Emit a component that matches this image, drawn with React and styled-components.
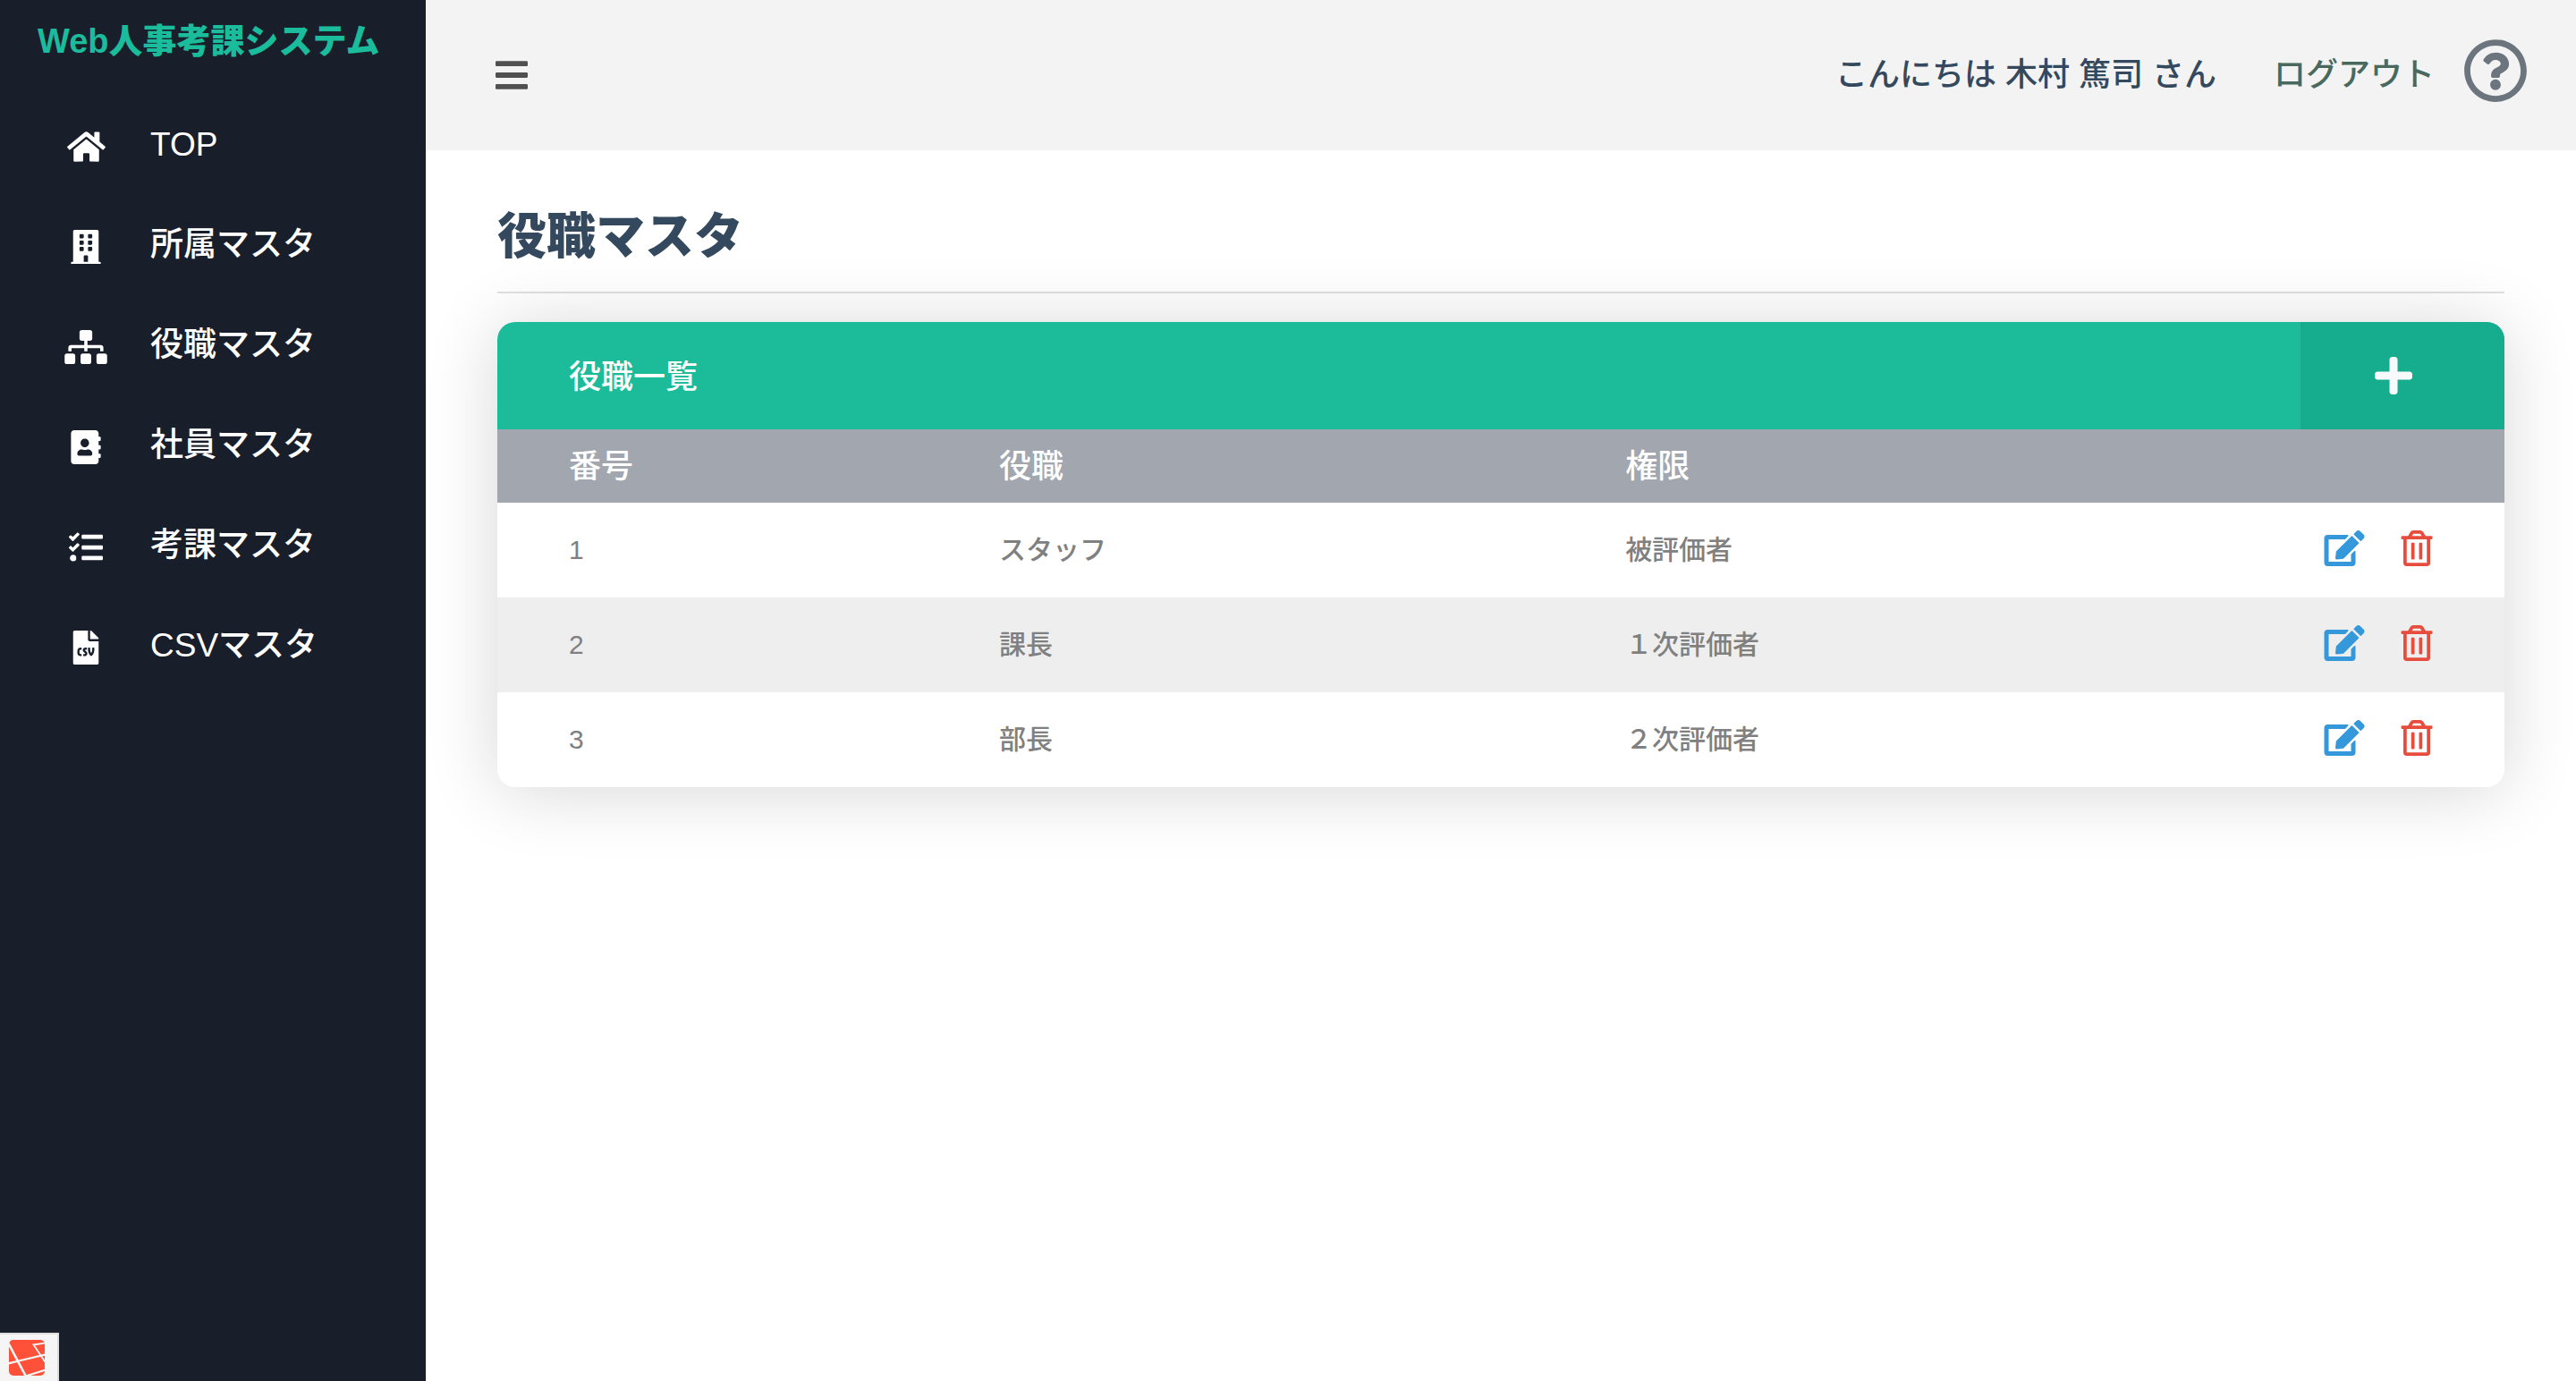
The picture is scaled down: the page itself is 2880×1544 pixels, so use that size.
import React from "react";
import styled, { createGlobalStyle } from "styled-components";
import {
  FaHome,
  FaBuilding,
  FaSitemap,
  FaAddressBook,
  FaTasks,
  FaFileCsv,
  FaBars,
  FaPlus,
  FaEdit,
  FaRegTrashAlt,
  FaRegQuestionCircle,
} from "react-icons/fa";

const GlobalStyle = createGlobalStyle`
  *, *::before, *::after { box-sizing: border-box; }
  body {
    margin: 0;
    background: #fff;
    color: #34495e;
    font-family: "Liberation Sans", "Noto Sans CJK JP", sans-serif;
    font-size: 36px;
    font-weight: 500;
    line-height: 54px;
  }
  svg { display: block; }
`;

const Layout = styled.div`
  display: flex;
  min-height: 100vh;
`;

const Sidebar = styled.aside`
  flex: 0 0 476px;
  background: #191e2b;
`;

const Brand = styled.a`
  display: block;
  padding: 16px 42px 0;
  color: #1abc9c;
  font-size: 38px;
  font-weight: 900;
  line-height: 60px;
  text-decoration: none;
  white-space: nowrap;
`;

const Menu = styled.ul`
  margin: 0;
  padding: 30px 0 0;
  list-style: none;
`;

const MenuLink = styled.a`
  display: flex;
  align-items: center;
  gap: 48px;
  height: 112px;
  padding: 0 72px;
  color: #fff;
  font-size: 37px;
  text-decoration: none;
  white-space: nowrap;
`;

const MenuIcon = styled.span`
  display: flex;
  justify-content: center;
  width: 48px;
  padding-top: 4px;
  font-size: 38px;
  svg { width: ${(p) => p.$width}px; }
`;

const Main = styled.div`
  flex: 1;
  min-width: 0;
`;

const Header = styled.header`
  display: flex;
  align-items: center;
  justify-content: space-between;
  height: 168px;
  padding: 0 54px 0 78px;
  background: #f3f3f3;
`;

const IconButton = styled.button`
  display: flex;
  padding: 0;
  border: 0;
  background: none;
  color: ${(p) => p.$color};
  font-size: ${(p) => p.$size}px;
  cursor: pointer;
  svg { width: ${(p) => p.$width}px; }
`;

const Account = styled.div`
  display: flex;
  align-items: center;
`;

const LogoutLink = styled.a`
  margin: 0 32px 0 64px;
  color: #49695e;
  text-decoration: none;
`;

const HelpLink = styled.a`
  padding-bottom: 10px;
  color: #6c757d;
  font-size: 72px;
`;

const Content = styled.main`
  padding: 56px 80px;
`;

const PageTitle = styled.h1`
  margin: 0 0 32px;
  padding-bottom: 22px;
  border-bottom: 2px solid #dee0e2;
  font-size: 55px;
  font-weight: 900;
  line-height: 80px;
`;

const Card = styled.section`
  overflow: hidden;
  border-radius: 20px;
  background: #fff;
  box-shadow: 0 4px 80px rgba(0, 0, 0, 0.16);
`;

const CardHeader = styled.div`
  display: flex;
  align-items: center;
  justify-content: space-between;
  height: 120px;
  padding-left: 80px;
  background: #1cbc9b;
  color: #fff;
`;

const CardTitle = styled.h2`
  margin: 0;
  padding-top: 4px;
  font-size: 36px;
  font-weight: 500;
`;

const AddButton = styled.button`
  display: flex;
  align-items: center;
  justify-content: center;
  width: 228px;
  height: 120px;
  padding: 0 20px 0 0;
  border: 0;
  background: #16ad8f;
  color: #f8f9fa;
  font-size: 48px;
  cursor: pointer;
`;

const Table = styled.table`
  width: 100%;
  border-collapse: collapse;
  table-layout: fixed;
  text-align: left;
`;

const HeadCell = styled.th`
  width: ${(p) => p.$width || "auto"};
  height: 82px;
  padding: 2px 0 0;
  background: #a2a6ae;
  color: #fff;
  font-weight: 500;
  &:first-child { padding-left: 80px; }
`;

const Row = styled.tr`
  color: #808080;
  font-size: 30px;
  &:nth-child(even) { background: #eee; }
`;

const Cell = styled.td`
  height: 106px;
  padding: 0;
  &:first-child { padding-left: 80px; }
`;

const Actions = styled.div`
  display: flex;
  justify-content: flex-end;
  gap: 40px;
  padding: 0 80px 4px 0;
`;

const DebugButton = styled.button`
  position: fixed;
  bottom: 0;
  left: 0;
  width: 66px;
  height: 54px;
  padding: 6px 14px 6px 10px;
  border: solid #ddd;
  border-width: 2px 2px 0 0;
  background: #f5f5f5;
  cursor: pointer;
`;

const menu = [
  { label: "TOP", Icon: FaHome, width: 43 },
  { label: "所属マスタ", Icon: FaBuilding, width: 34 },
  { label: "役職マスタ", Icon: FaSitemap, width: 48 },
  { label: "社員マスタ", Icon: FaAddressBook, width: 34 },
  { label: "考課マスタ", Icon: FaTasks, width: 38 },
  { label: "CSVマスタ", Icon: FaFileCsv, width: 30 },
];

const positions = [
  { id: 1, name: "スタッフ", role: "被評価者" },
  { id: 2, name: "課長", role: "１次評価者" },
  { id: 3, name: "部長", role: "２次評価者" },
];

function DebugLogo() {
  return (
    <svg width="40" height="40" viewBox="0 0 40 40" aria-hidden="true">
      <defs>
        <clipPath id="tile">
          <rect width="40" height="40" rx="5" />
        </clipPath>
      </defs>
      <g clipPath="url(#tile)">
        <rect width="40" height="40" fill="#ff513a" />
        <g fill="none" stroke="#f5f5f5">
          <path d="M-1 3 L19 41" strokeWidth="2.6" />
          <path d="M-1 26.5 L11 23.5 L41 16.5" strokeWidth="2.2" />
          <path d="M41 3.5 L27.5 5.5 L41 25.5" strokeWidth="1.8" />
          <path d="M17 41 L41 33.5" strokeWidth="2.2" />
        </g>
      </g>
    </svg>
  );
}

export default function App() {
  return (
    <>
      <GlobalStyle />
      <Layout>
        <Sidebar>
          <Brand href="#">Web人事考課システム</Brand>
          <nav>
            <Menu>
              {menu.map(({ label, Icon, width }) => (
                <li key={label}>
                  <MenuLink href="#">
                    <MenuIcon $width={width}>
                      <Icon />
                    </MenuIcon>
                    {label}
                  </MenuLink>
                </li>
              ))}
            </Menu>
          </nav>
        </Sidebar>
        <Main>
          <Header>
            <IconButton $color="#505050" $size={42} $width={36} aria-label="メニュー">
              <FaBars />
            </IconButton>
            <Account>
              <span>こんにちは 木村 篤司 さん</span>
              <LogoutLink href="#">ログアウト</LogoutLink>
              <HelpLink href="#" aria-label="ヘルプ">
                <FaRegQuestionCircle />
              </HelpLink>
            </Account>
          </Header>
          <Content>
            <PageTitle>役職マスタ</PageTitle>
            <Card>
              <CardHeader>
                <CardTitle>役職一覧</CardTitle>
                <AddButton aria-label="追加">
                  <FaPlus />
                </AddButton>
              </CardHeader>
              <Table>
                <thead>
                  <tr>
                    <HeadCell $width="25%">番号</HeadCell>
                    <HeadCell $width="31.2%">役職</HeadCell>
                    <HeadCell>権限</HeadCell>
                    <HeadCell aria-label="操作" />
                  </tr>
                </thead>
                <tbody>
                  {positions.map((p) => (
                    <Row key={p.id}>
                      <Cell>{p.id}</Cell>
                      <Cell>{p.name}</Cell>
                      <Cell>{p.role}</Cell>
                      <Cell>
                        <Actions>
                          <IconButton $color="#3498db" $size={40} $width={46} aria-label="編集">
                            <FaEdit />
                          </IconButton>
                          <IconButton $color="#e74c3c" $size={40} $width={36} aria-label="削除">
                            <FaRegTrashAlt />
                          </IconButton>
                        </Actions>
                      </Cell>
                    </Row>
                  ))}
                </tbody>
              </Table>
            </Card>
          </Content>
        </Main>
      </Layout>
      <DebugButton aria-label="デバッグバー">
        <DebugLogo />
      </DebugButton>
    </>
  );
}
